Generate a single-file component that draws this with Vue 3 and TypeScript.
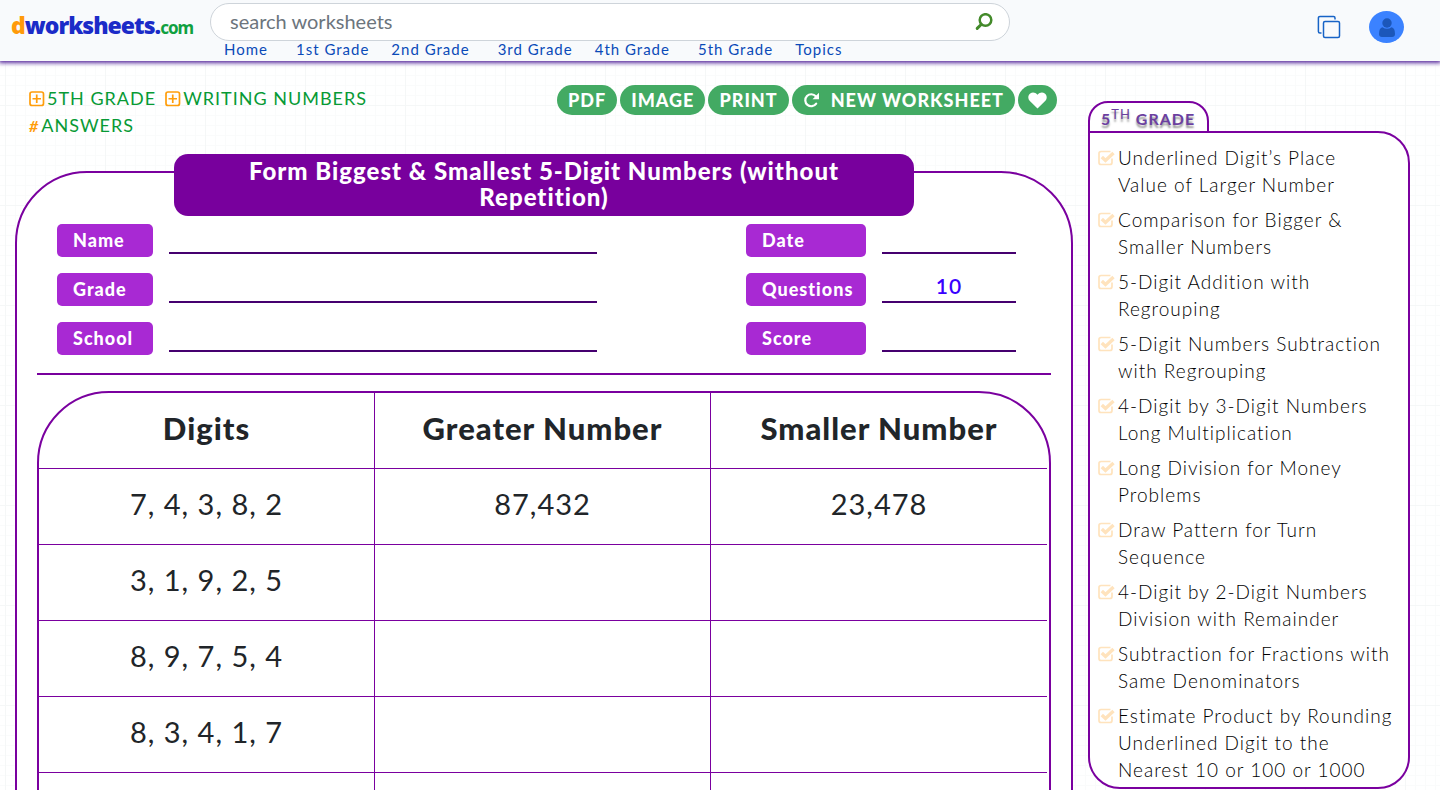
<script setup lang="ts">
import { ref } from 'vue'

interface Row {
  digits: string
  greater: string
  smaller: string
}

const query = ref('')

const navLinks: string[] = ['Home', '1st Grade', '2nd Grade', '3rd Grade', '4th Grade', '5th Grade', 'Topics']

const fields = [
  { id: 'name', label: 'Name', value: '' },
  { id: 'date', label: 'Date', value: '' },
  { id: 'grade', label: 'Grade', value: '' },
  { id: 'questions', label: 'Questions', value: '10' },
  { id: 'school', label: 'School', value: '' },
  { id: 'score', label: 'Score', value: '' },
]

const rows: Row[] = [
  { digits: '7, 4, 3, 8, 2', greater: '87,432', smaller: '23,478' },
  { digits: '3, 1, 9, 2, 5', greater: '', smaller: '' },
  { digits: '8, 9, 7, 5, 4', greater: '', smaller: '' },
  { digits: '8, 3, 4, 1, 7', greater: '', smaller: '' },
  { digits: '', greater: '', smaller: '' },
  { digits: '', greater: '', smaller: '' },
]

const topics: string[] = [
  'Underlined Digit’s Place\nValue of Larger Number',
  'Comparison for Bigger &\nSmaller Numbers',
  '5-Digit Addition with\nRegrouping',
  '5-Digit Numbers Subtraction\nwith Regrouping',
  '4-Digit by 3-Digit Numbers\nLong Multiplication',
  'Long Division for Money\nProblems',
  'Draw Pattern for Turn\nSequence',
  '4-Digit by 2-Digit Numbers\nDivision with Remainder',
  'Subtraction for Fractions with\nSame Denominators',
  'Estimate Product by Rounding\nUnderlined Digit to the\nNearest 10 or 100 or 1000',
]
</script>

<template>
  <header class="topbar">
    <a class="logo" href="#"><span class="logo-d">d</span>worksheets.<span class="logo-com">com</span></a>
    <div class="center">
      <form class="search" role="search" @submit.prevent>
        <input v-model="query" type="text" placeholder="search worksheets" aria-label="search worksheets" />
        <button type="submit" aria-label="Search">
          <svg width="18" height="18" viewBox="0 0 18 18" fill="none" stroke="#438a2a" stroke-linecap="round">
            <circle cx="10.5" cy="7" r="5.8" stroke-width="2.5" />
            <path d="M6.2 11.5 2.2 15.4" stroke-width="3" />
          </svg>
        </button>
      </form>
      <nav class="nav">
        <a v-for="link in navLinks" :key="link" href="#">{{ link }}</a>
      </nav>
    </div>
    <div class="actions">
      <button type="button" class="copy" aria-label="Copy">
        <svg width="24" height="24" viewBox="0 0 24 24" fill="none" stroke="#1763c6" stroke-width="1.5">
          <path d="M4.500 18H2.900A1.500 1.500 0 0 1 1.400 16.500V2.900A1.500 1.500 0 0 1 2.900 1.400H16.500A1.500 1.500 0 0 1 18 2.900V4.500" />
          <rect x="6.500" y="6.500" width="16" height="16" rx="1.500" />
        </svg>
      </button>
      <button type="button" class="user" aria-label="Account">
        <svg width="16" height="19" viewBox="0 0 16 19" fill="#1c57ba">
          <circle cx="8" cy="5" r="4.700" />
          <path d="M3.500 9.300Q8 12.300 12.500 9.300Q16 10 16 16Q16 19 13 19H3Q0 19 0 16Q0 10 3.500 9.300Z" />
        </svg>
      </button>
    </div>
  </header>

  <div class="page">
    <main>
      <div class="toolbar">
        <div class="crumbs">
          <a v-for="c in ['5TH GRADE', 'WRITING NUMBERS']" :key="c" href="#">
            <svg width="16" height="16" viewBox="0 0 16 16" fill="none" stroke="#ff9d0a" stroke-width="1.700">
              <rect x="1" y="1" width="13.500" height="13.500" rx="2" />
              <path d="M7.750 3.500V12M3.500 7.750H12" />
            </svg>{{ c }}</a>
          <a href="#"><span class="hash">#</span>ANSWERS</a>
        </div>
        <div class="buttons">
          <button type="button">PDF</button>
          <button type="button">IMAGE</button>
          <button type="button">PRINT</button>
          <button type="button" class="with-icon">
            <svg width="17" height="17" viewBox="0 0 17 17">
              <path d="M13.200 11.700A6 6 0 1 1 12.800 4.300" fill="none" stroke="#fff" stroke-width="2.200" stroke-linecap="round" />
              <path d="M16 .8V7.300H9.500Z" fill="#fff" />
            </svg>
            NEW WORKSHEET
          </button>
          <button type="button" class="heart" aria-label="Favourite">
            <svg width="19" height="17" viewBox="0 0 19 17" fill="#fff">
              <path d="M9.500 16.500 1.600 8.700C-.4 6.500 0 3.200 2.200 1.500 4.500-.2 7.300.3 9.500 2.700 11.700.3 14.500-.2 16.800 1.500 19 3.200 19.400 6.500 17.400 8.700Z" />
            </svg>
          </button>
        </div>
      </div>

      <section class="sheet">
        <h1>Form Biggest &amp; Smallest 5-Digit Numbers (without Repetition)</h1>
        <form class="fields" @submit.prevent>
          <template v-for="f in fields" :key="f.id">
            <label :for="f.id">{{ f.label }}</label>
            <input :id="f.id" type="text" :value="f.value" />
          </template>
        </form>
        <hr />
        <div class="table-frame">
          <table>
            <thead>
              <tr>
                <th>Digits</th>
                <th>Greater Number</th>
                <th>Smaller Number</th>
              </tr>
            </thead>
            <tbody>
              <tr v-for="(r, i) in rows" :key="i">
                <td>{{ r.digits }}</td>
                <td>{{ r.greater }}</td>
                <td>{{ r.smaller }}</td>
              </tr>
            </tbody>
          </table>
        </div>
      </section>
    </main>

    <aside>
      <h2>5<sup>TH</sup> GRADE</h2>
      <ul>
        <li v-for="t in topics" :key="t">
          <svg width="17" height="16" viewBox="0 0 17 16" fill="none" stroke="#ffe3bd">
            <path d="M14 8.500V12.500A2 2 0 0 1 12 14.500H3A2 2 0 0 1 1 12.500V3.500A2 2 0 0 1 3 1.500H12.500" stroke-width="1.700" />
            <path d="M3.800 7 7.500 10.500 15.500 3" stroke-width="3.400" />
          </svg>
          <a href="#">{{ t }}</a>
        </li>
      </ul>
    </aside>
  </div>
</template>

<style>
html {
  scrollbar-width: none;
}
body {
  margin: 0;
  font-family: Lato, "Liberation Sans", sans-serif;
  letter-spacing: 1px;
  color: #212529;
  background-color: #fff;
  background-image:
    linear-gradient(#f5f7f7 1px, transparent 1px),
    linear-gradient(90deg, #f5f7f7 1px, transparent 1px),
    linear-gradient(#fafbfb 1px, transparent 1px),
    linear-gradient(90deg, #fafbfb 1px, transparent 1px);
  background-size: 100px 100px, 100px 100px, 10px 10px, 10px 10px;
  background-position: 5px 5px;
}
</style>

<style scoped>
* {
  box-sizing: border-box;
}
a {
  text-decoration: none;
}
button,
input {
  font-family: inherit;
  letter-spacing: inherit;
}
button {
  border: 0;
  padding: 0;
  background: none;
  display: flex;
  align-items: center;
  justify-content: center;
}
.topbar {
  display: grid;
  grid-template-columns: 199px minmax(0, 800px) 1fr;
  height: 61px;
  padding: 3px 36px 0 11px;
  background: #f8fafc;
  box-shadow: 0 1px 4px 1px #5a2c9e;
}
.logo {
  font: 900 23px/44px "Noto Sans", sans-serif;
  letter-spacing: -1px;
  color: #1b2bc8;
}
.logo-d {
  color: #ff9a0a;
}
.logo-com {
  color: #10a040;
  font-size: 17px;
  font-weight: 700;
}
.search {
  display: flex;
  align-items: center;
  height: 38px;
  padding: 0 16px 0 19px;
  border: 1px solid #ced4da;
  border-radius: 19px;
  background: #fff;
}
.search input {
  flex: 1;
  min-width: 0;
  padding: 0 0 3px;
  border: 0;
  outline: 0;
  background: none;
  font-size: 20px;
  letter-spacing: 0;
}
.search input::placeholder {
  color: #6c757d;
}
.nav {
  display: flex;
  padding-left: 14px;
  font-size: 15px;
  line-height: 16px;
}
.nav a {
  color: #0a4ab8;
  margin-right: 22px;
}
.nav a:nth-child(odd) {
  margin-right: 28px;
}
.actions {
  display: flex;
  justify-content: flex-end;
  align-items: center;
  gap: 28px;
  height: 48px;
}
.user {
  width: 35px;
  height: 32px;
  border-radius: 50%;
  background: #3b82ff;
}
.page {
  display: grid;
  grid-template-columns: minmax(0, 1fr) 322px;
  gap: 15px;
  align-items: start;
  padding: 24px 30px 24px 15px;
}
.toolbar {
  display: flex;
  justify-content: space-between;
  align-items: flex-start;
  padding: 0 16px 0 14px;
}
.crumbs {
  display: flex;
  flex-wrap: wrap;
  column-gap: 9px;
  width: 380px;
  font-size: 18px;
  line-height: 27px;
}
.crumbs a {
  display: flex;
  align-items: center;
  gap: 2px;
  color: #079a35;
}
.hash {
  color: #ff9d0a;
  font-size: 16px;
  font-style: italic;
  font-weight: 700;
}
.buttons {
  display: flex;
  gap: 3px;
}
.buttons button {
  height: 30px;
  padding: 0 11px;
  border-radius: 15px;
  background: #43aa63;
  color: #fff;
  font-size: 18px;
  font-weight: 900;
}
.buttons .with-icon {
  gap: 11px;
}
.buttons .heart {
  padding: 0 10px;
}
.sheet {
  margin-top: 32px;
  padding: 0 20px 20px;
  border: 2px solid #7a009f;
  border-radius: 72px;
  background: #fff;
}
.sheet h1 {
  width: 73%;
  margin: -19px auto 8px;
  padding: 4px 60px 6px;
  border-radius: 14px;
  background: #78009d;
  color: #fff;
  font-size: 24px;
  font-weight: 900;
  line-height: 26px;
  text-align: center;
}
.fields {
  display: grid;
  grid-template-columns: 96px minmax(0, 1fr) 120px 134px;
  grid-auto-rows: 33px;
  gap: 16px;
  padding: 0 35px 0 20px;
}
.fields label {
  padding-left: 16px;
  border-radius: 5px;
  background: #a829d3;
  color: #fff;
  font-size: 18px;
  font-weight: 900;
  line-height: 32px;
}
.fields input {
  width: 100%;
  height: 30px;
  padding: 0 0 4px;
  border: 0;
  border-bottom: 2px solid #45006f;
  outline: 0;
  background: none;
  color: #3a00ff;
  font-size: 21px;
  font-weight: 600;
  text-align: center;
}
.fields input:nth-of-type(odd) {
  width: calc(100% - 133px);
}
hr {
  margin: 18px 0 16px;
  border: 0;
  border-top: 2px solid #78009d;
}
.table-frame {
  overflow: hidden;
  padding-right: 2px;
  border: 2px solid #7a009f;
  border-radius: 72px;
}
table {
  width: 100%;
  border-spacing: 0;
  table-layout: fixed;
}
th,
td {
  height: 76px;
  padding: 0 0 6px;
  border-right: 1px solid #7a009f;
  border-bottom: 1px solid #7a009f;
  font-size: 29px;
  text-align: center;
}
th {
  font-size: 31px;
  font-weight: 900;
}
th:last-child,
td:last-child {
  border-right: 0;
}
tbody tr:last-child td {
  border-bottom: 0;
}
aside {
  padding-top: 16px;
}
aside h2 {
  position: relative;
  width: max-content;
  height: 32px;
  margin: 0 0 -2px;
  padding: 0 12px 0 11px;
  border: 2px solid #7a009f;
  border-radius: 20px 20px 0 0;
  background: #fff;
  color: #6b3fa0;
  font-size: 16px;
  font-weight: 700;
  line-height: 32px;
  text-shadow: 0 3px 2px #999;
}
aside h2 sup {
  font-size: 13px;
  font-weight: 400;
  line-height: 0;
}
aside ul {
  margin: 0;
  padding: 11px 6px 4px 8px;
  border: 2px solid #7a009f;
  border-radius: 0 32px 32px 32px;
  background: #fff;
  list-style: none;
}
aside li {
  display: flex;
  gap: 3px;
  font-size: 19px;
  font-weight: 300;
  line-height: 27px;
}
aside li + li {
  margin-top: 8px;
}
aside li svg {
  flex: none;
  margin-top: 6px;
}
aside li a {
  color: #000;
  white-space: pre-line;
}
</style>
